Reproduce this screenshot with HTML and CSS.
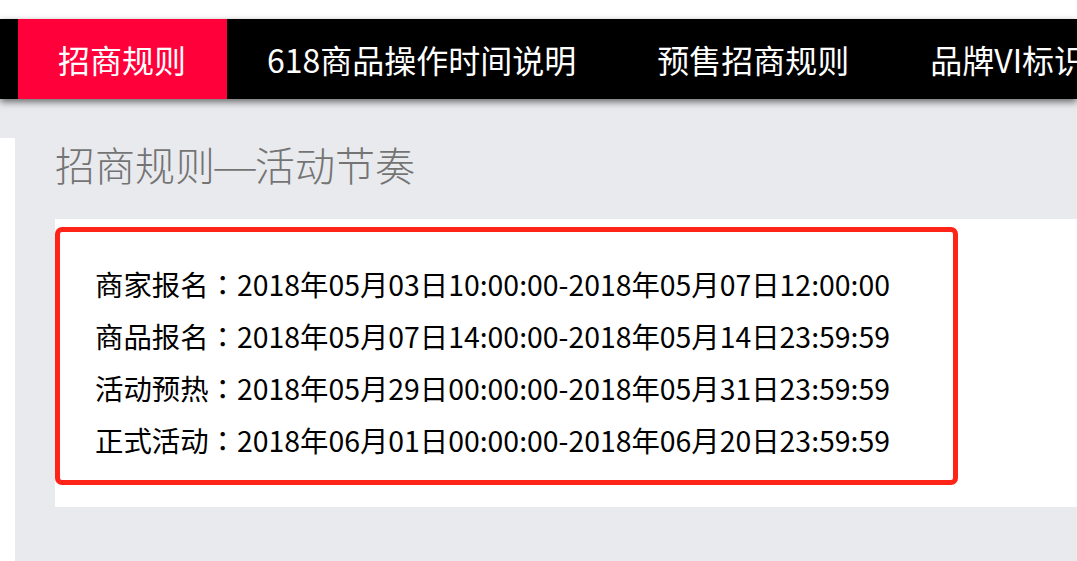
FILE: index.html
```html
<!DOCTYPE html>
<html lang="zh-CN">
<head>
  <meta charset="UTF-8" />
  <meta name="viewport" content="width=device-width, initial-scale=1.0" />
  <title>招商规则</title>
  <link rel="stylesheet" href="styles.css">
</head>
<body>
  <div class="nav">
    <div class="nav-item active">招商规则</div>
    <div class="nav-item">618商品操作时间说明</div>
    <div class="nav-item">预售招商规则</div>
    <div class="nav-item">品牌VI标识说明</div>
  </div>
  <div class="band"></div>
  <div class="main">
    <div class="section">
      <h1 class="title">招商规则<span class="dash">—</span>活动节奏</h1>
      <div class="card">
        <div class="rules">
          <p>商家报名<span class="sep" lang="ja">：</span>2018年05月03日10:00:00-2018年05月07日12:00:00</p>
          <p>商品报名<span class="sep" lang="ja">：</span>2018年05月07日14:00:00-2018年05月14日23:59:59</p>
          <p>活动预热<span class="sep" lang="ja">：</span>2018年05月29日00:00:00-2018年05月31日23:59:59</p>
          <p>正式活动<span class="sep" lang="ja">：</span>2018年06月01日00:00:00-2018年06月20日23:59:59</p>
        </div>
      </div>
    </div>
  </div>
</body>
</html>
```

FILE: styles.css
```css
* { box-sizing: border-box; }
html, body {
  margin: 0;
  padding: 0;
  overflow: hidden;
}
body {
  background: #fff;
  padding-top: 19px;
  font-family: "Noto Sans CJK SC", "Noto Sans", sans-serif;
}
.nav {
  display: flex;
  height: 80px;
  padding-left: 18px;
  background: #000;
  white-space: nowrap;
  overflow: hidden;
  position: relative;
  z-index: 1;
  box-shadow: 0 3px 7px rgba(0, 0, 0, 0.55);
}
.nav-item {
  flex: none;
  padding: 0 41px 0 40px;
  line-height: 80px;
  font-size: 32px;
  color: #fff;
}
.nav-item.active {
  background: #ff003b;
}
.band {
  height: 39px;
  background: #e9eaee;
}
.main {
  padding-left: 15px;
  background: #fff;
}
.section {
  min-height: 440px;
  padding-left: 40px;
  background: #e9eaee;
}
.title {
  margin: 0;
  padding-top: 5px;
  font-size: 40px;
  line-height: 42px;
  font-weight: 300;
  color: #747474;
}
.title .dash {
  display: inline-block;
  width: 40px;
  text-align: center;
  transform: scaleX(1.3);
}
.card {
  margin-top: 34px;
  padding: 8px 0 22px;
  background: #fff;
}
.rules {
  width: 903px;
  padding: 26px 0 14px 35px;
  border: 5px solid #ff2418;
  border-radius: 7px;
  font-size: 28.4px;
  line-height: 52px;
  color: #000;
}
.rules p {
  margin: 0;
  white-space: nowrap;
}
.rules .sep {
  font-family: "Noto Sans CJK JP", sans-serif;
}
```
